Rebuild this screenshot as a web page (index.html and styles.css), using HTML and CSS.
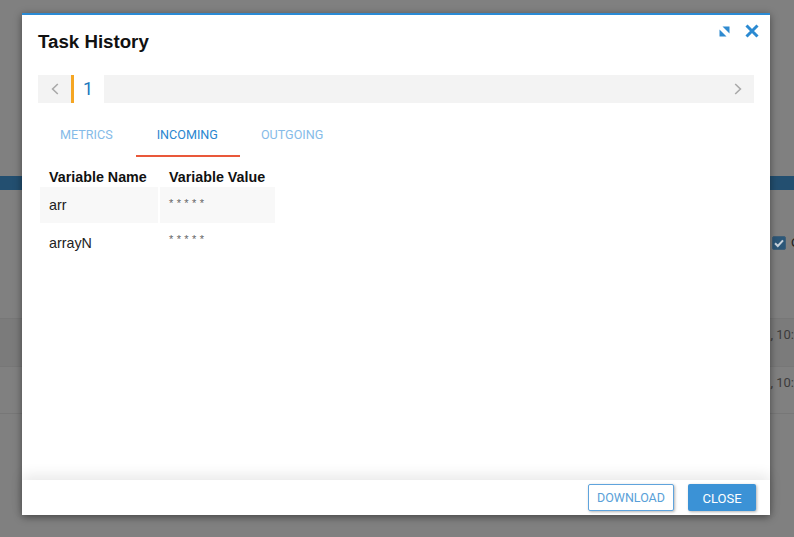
FILE: index.html
```html
<!DOCTYPE html>
<html lang="en">
<head>
<meta charset="utf-8">
<title>Task History</title>
<link rel="stylesheet" href="styles.css">
</head>
<body>
<div class="backdrop">
  <div class="bg-band"></div>
  <div class="bg-check-row">
    <span class="bg-check"><svg viewBox="0 0 14 14" width="14" height="14"><path d="M3 7.2l2.8 2.8L11 4.4" fill="none" stroke="#c9d3dc" stroke-width="2"/></svg></span>
    <span class="bg-check-label">C</span>
  </div>
  <div class="bg-row bg-row-a"><span>, 10:</span></div>
  <div class="bg-row"><span>, 10:</span></div>
</div>
<div class="modal">
  <header class="modal-head">
    <h1 class="title">Task History</h1>
    <div class="head-icons">
      <svg class="icon-expand" viewBox="0 0 11 11" width="11" height="11"><path d="M3.5 0.5H10.5V7.5z" fill="#2f8ad0"/><path d="M0.5 3.5V10.5H7.5z" fill="#2f8ad0"/></svg>
      <svg class="icon-close" viewBox="0 0 14 14" width="14" height="14"><path d="M1.5 1.5l11 11M12.5 1.5l-11 11" fill="none" stroke="#2b8ad2" stroke-width="3"/></svg>
    </div>
  </header>
  <div class="pager">
    <button class="pager-arrow"><svg viewBox="0 0 8 12" width="8" height="12"><path d="M6.8 1L1.6 6l5.2 5" fill="none" stroke="#a9a9a9" stroke-width="1.6"/></svg></button>
    <div class="pager-item">1</div>
    <div class="pager-track"><svg viewBox="0 0 8 12" width="8" height="12"><path d="M1.2 1l5.2 5-5.2 5" fill="none" stroke="#a9a9a9" stroke-width="1.6"/></svg></div>
  </div>
  <nav class="tabs">
    <a class="tab">METRICS</a>
    <a class="tab tab-active">INCOMING</a>
    <a class="tab tab-after">OUTGOING</a>
  </nav>
  <table class="vars">
    <thead>
      <tr><th class="col-name">Variable Name</th><th class="col-value">Variable Value</th></tr>
    </thead>
    <tbody>
      <tr class="shaded"><td>arr</td><td class="mask">*****</td></tr>
      <tr><td>arrayN</td><td class="mask">*****</td></tr>
    </tbody>
  </table>
  <div class="body-fill"></div>
  <footer class="modal-foot">
    <button class="btn btn-outline">DOWNLOAD</button>
    <button class="btn btn-solid">CLOSE</button>
  </footer>
</div>
</body>
</html>
```
FILE: styles.css
```css
* { box-sizing: border-box; }
html, body { margin: 0; height: 100%; }
body {
  position: relative;
  width: 794px;
  height: 537px;
  overflow: hidden;
  background: #808080;
  font-family: "Liberation Sans", Arial, sans-serif;
}
.backdrop { height: 537px; display: flex; flex-direction: column; }
.bg-band { margin-top: 176px; height: 14px; background: #234f70; flex: none; }
.bg-check-row {
  height: 128px;
  display: flex;
  justify-content: flex-end;
  align-items: flex-start;
  padding-top: 46px;
  gap: 5px;
  flex: none;
}
.bg-check {
  width: 14px;
  height: 14px;
  background: #2c5778;
  border: 1px solid #3f5f78;
  border-radius: 2px;
  display: flex;
}
.bg-check svg { flex: none; margin: -1px; }
.bg-check-label { font-size: 13px; color: #222; width: 3px; overflow: hidden; line-height: 14px; }
.bg-row {
  height: 48px;
  flex: none;
  border-top: 1px solid #777;
  display: flex;
  justify-content: flex-end;
  align-items: flex-start;
  padding-top: 8px;
  font: 13px/16px "Roboto", sans-serif;
  color: #3c3c3c;
}
.bg-row span { white-space: nowrap; }
.bg-row-a { background: #7b7b7b; }
.bg-row + .bg-row { border-bottom: 1px solid #777; }

.modal {
  position: absolute;
  left: 22px;
  top: 13px;
  width: 748px;
  height: 502px;
  background: #fff;
  border-top: 2px solid #2a8ad4;
  box-shadow: 0 2px 8px rgba(0, 0, 0, .45);
  display: flex;
  flex-direction: column;
  padding: 0 16px;
}
.modal-head {
  height: 60px;
  flex: none;
  display: flex;
  justify-content: space-between;
  align-items: flex-start;
}
.title {
  margin: 16px 0 0;
  font-size: 18.7px;
  line-height: 22px;
  font-weight: 700;
  color: #111;
}
.head-icons { display: flex; align-items: center; gap: 15px; margin-top: 9px; margin-right: -5px; }
.pager {
  height: 28px;
  flex: none;
  display: flex;
  background: #f3f3f3;
}
.pager-arrow {
  width: 33px;
  border: 0;
  padding: 0 0 0 1px;
  background: transparent;
  display: flex;
  align-items: center;
  justify-content: center;
}
.pager-item {
  width: 33px;
  background: #fff;
  border-left: 3px solid #f5a623;
  color: #1b78bd;
  font: 400 18px/28px "Roboto", sans-serif;
  padding-left: 9px;
}
.pager-track {
  flex: 1;
  display: flex;
  align-items: center;
  justify-content: flex-end;
  padding-right: 12px;
}
.tabs { display: flex; flex: none; margin-top: 9px; height: 45px; }
.tab {
  font: 12.6px/45px "Roboto", sans-serif;
  color: #85bbe8;
  padding: 0 22px;
  height: 45px;
}
.tab-active { color: #2a86cf; border-bottom: 2px solid #e9583a; padding: 0 22px 0 21px; margin-left: 1px; }
.tab-after { padding-left: 21px; }
.vars {
  flex: none;
  align-self: flex-start;
  margin: 9px 0 0;
  border-collapse: separate;
  border-spacing: 2px 0;
  color: #222;
  font-size: 14.3px;
}
.vars th {
  text-align: left;
  font-size: 14.3px;
  color: #111;
  height: 21px;
  padding: 0 9px;
  white-space: nowrap;
}
.col-name { width: 118px; }
.col-value { width: 115px; }
.vars td { height: 40px; padding: 0 9px; vertical-align: middle; }
.vars .shaded td { background: #f8f8f8; height: 36px; }
.vars .mask {
  vertical-align: top;
  font-size: 11px;
  letter-spacing: 3.4px;
  line-height: 16px;
  padding-top: 8px;
  color: #666;
}
.body-fill { flex: 1; }
.modal-foot {
  flex: none;
  height: 35px;
  margin: 0 -16px;
  padding: 0 14px 0;
  background: #fff;
  box-shadow: 0 -5px 14px rgba(0, 0, 0, .09);
  display: flex;
  align-items: center;
  justify-content: flex-end;
  gap: 14px;
}
.btn {
  height: 27px;
  border-radius: 2px;
  font: 12.5px "Roboto", sans-serif;
  padding: 0;
  box-shadow: 1px 1px 3px rgba(0, 0, 0, .3);
}
.btn-outline { width: 86px; background: #fff; border: 1px solid #5fa4dd; color: #5a9fd8; }
.btn-solid { width: 68px; background: #3b92d6; border: 0; color: #fff; font-size: 13px; padding-top: 2px; }
```
